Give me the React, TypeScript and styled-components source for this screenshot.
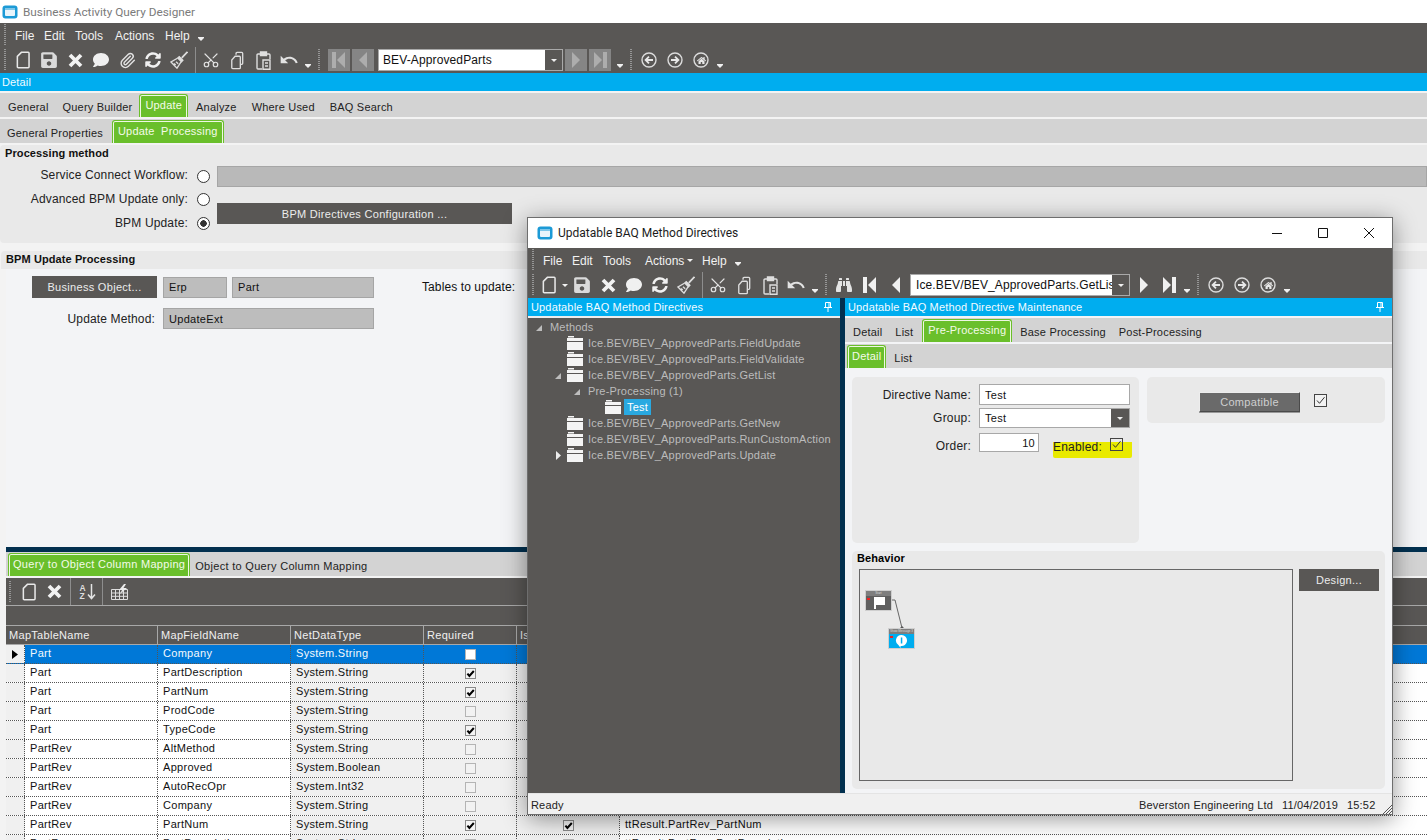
import React from "react";
import styled, { createGlobalStyle } from "styled-components";
import { Paperclip, Scissors } from "lucide-react";
import { FaBinoculars, FaComment, FaSave, FaSyncAlt, FaHome } from "react-icons/fa";
import { MdUndo } from "react-icons/md";

const UI_FONT = `"Liberation Sans", Arial, sans-serif`;
const TITLE_FONT = `Roboto, "Liberation Sans", sans-serif`;

const DARK = "#595755";
const CYAN = "#00adef";
const GREEN = "#6abf2b";
const TAB_GRAY = "#d3d3d3";
const GROUP = "#e9e9e9";
const PANEL = "#f3f4f6";
const NAVY = "#02304f";

const GlobalStyle = createGlobalStyle`
  html, body {
    margin: 0;
    padding: 0;
    width: 1427px;
    height: 840px;
    overflow: hidden;
    background: #f3f3f3;
  }
  * { box-sizing: border-box; }
`;

/* ---------- small drawn icons ---------- */

const Logo = () => (
  <svg width="16" height="14" viewBox="0 0 16 14">
    <rect x="0.5" y="0.5" width="15" height="13" rx="3" fill="#1c9ad6" />
    <rect x="3" y="3" width="10" height="8" rx="1" fill="#e8f4fb" />
    <rect x="3" y="3" width="10" height="2" fill="#7cc6ea" />
  </svg>
);

const NewPage = ({ size = 18 }: { size?: number }) => (
  <svg width={size * 0.8} height={size} viewBox="0 0 16 20" fill="none" stroke="#e8e8e8" strokeWidth="1.7">
    <path d="M6 1.5h7.5a1 1 0 0 1 1 1v15a1 1 0 0 1-1 1h-11a1 1 0 0 1-1-1V6z" />
  </svg>
);

const CrossIcon = () => (
  <svg width="15" height="15" viewBox="0 0 15 15" fill="none" stroke="#f2f2f2" strokeWidth="3.8">
    <path d="M2 2l11 11M13 2L2 13" />
  </svg>
);

const BroomIcon = () => (
  <svg width="18" height="18" viewBox="0 0 18 18" fill="none" stroke="#dedede" strokeWidth="1.3">
    <path d="M17.5.8 11.8 6.8" strokeWidth="1.8" />
    <path d="M9.3 5.6l3.6 3.6-1.4 1.6-3.8-3.8z" fill="#dedede" />
    <path d="M7.4 7.3 1 11l6 6.2 4.2-6.6M3.8 12.6l2 1.2M6 10.8l2.2 2" />
  </svg>
);

const CopyIcon = () => (
  <svg width="14" height="19" viewBox="0 0 14 20" fill="none" stroke="#dedede" strokeWidth="1.4">
    <path d="M6 4V2.5a1 1 0 0 1 1-1h5a1 1 0 0 1 1 1V13a1 1 0 0 1-1 1h-1.5" />
    <path d="M5 5.5h4.5a1 1 0 0 1 1 1v11a1 1 0 0 1-1 1h-7a1 1 0 0 1-1-1v-8z" />
  </svg>
);

const PasteIcon = () => (
  <svg width="15" height="19" viewBox="0 0 15 19" fill="none" stroke="#dedede" strokeWidth="1.4">
    <path d="M4 3H2a1 1 0 0 0-1 1v13a1 1 0 0 0 1 1h4M11 3h2a1 1 0 0 1 1 1v4" />
    <path d="M4.5 1h6v3.5h-6z" fill="#dedede" />
    <path d="M7 9h7v9.3H7zM9 12h3M9 15h3" />
  </svg>
);

const Triangle = ({ dir, bar, color }: { dir: "left" | "right"; bar?: boolean; color: string }) => (
  <svg width="14" height="18" viewBox="0 0 14 18" fill={color}>
    {dir === "left" ? (
      <>
        {bar && <rect x="0" y="1" width="4" height="16" />}
        <polygon points={bar ? "13,1 13,17 5,9" : "11,1 11,17 3,9"} />
      </>
    ) : (
      <>
        {bar && <rect x="10" y="1" width="4" height="16" />}
        <polygon points={bar ? "1,1 1,17 9,9" : "3,1 3,17 11,9"} />
      </>
    )}
  </svg>
);

const CircleArrow = ({ dir }: { dir: "left" | "right" }) => (
  <svg width="16" height="16" viewBox="0 0 16 16" fill="none">
    <circle cx="8" cy="8" r="7" stroke="#dcdcdc" strokeWidth="1.4" />
    <path
      d={dir === "left" ? "M12 8H5M8 4.6 4.6 8 8 11.4" : "M4 8h7M8 4.6 11.4 8 8 11.4"}
      stroke="#e8e8e8"
      strokeWidth="1.8"
    />
  </svg>
);

const HomeWrap = styled.span`
  position: relative;
  width: 16px;
  height: 16px;
  display: flex;
  align-items: center;
  justify-content: center;
  & > svg:first-child {
    position: absolute;
    inset: 0;
  }
`;

const CircleHome = () => (
  <HomeWrap>
    <svg width="16" height="16" viewBox="0 0 16 16" fill="none">
      <circle cx="8" cy="8" r="7" stroke="#dcdcdc" strokeWidth="1.4" />
    </svg>
    <FaHome size={9} color="#e8e8e8" />
  </HomeWrap>
);

const SortIcon = () => (
  <svg width="17" height="17" viewBox="0 0 17 17" fill="none">
    <text x="0.5" y="7.5" fontFamily={UI_FONT} fontSize="8.5" fontWeight="700" fill="#dedede">A</text>
    <text x="0.5" y="16" fontFamily={UI_FONT} fontSize="8.5" fontWeight="700" fill="#dedede">Z</text>
    <path d="M12.5 1v14M9 11.5l3.5 4 3.5-4" stroke="#e4e4e4" strokeWidth="1.5" />
  </svg>
);

const TableBolt = () => (
  <svg width="17" height="16" viewBox="0 0 17 16" fill="none" stroke="#dedede" strokeWidth="1">
    <path d="M.5 5.5h16v10H.5zM.5 9h16M.5 12.3h16M4.5 5.5v10M8.5 5.5v10M12.5 5.5v10" />
    <polygon points="13,0 8,6 11,6 9,10 16,4 12.5,4 15,0" fill="#ececec" stroke="none" />
  </svg>
);

const FolderIcon = () => (
  <svg width="16" height="14" viewBox="0 0 16 14" fill="#f4f4f4">
    <rect x="1" y="0" width="6" height="1.5" />
    <rect x="0" y="2" width="16" height="3" />
    <rect x="0" y="6" width="16" height="8" />
  </svg>
);

const PinIcon = () => (
  <svg width="8" height="10" viewBox="0 0 8 10" fill="none" stroke="#fff" strokeWidth="1">
    <path d="M1.5.5h5v5h-5zM0 5.5h8M4 5.5V10M5 .5v5" />
  </svg>
);

const Expander = ({ open }: { open?: boolean }) => (
  <svg width="7" height="9" viewBox="0 0 7 9" fill={open ? "#bdbdbd" : "#ececec"}>
    {open ? <polygon points="6,2 6,8 0,8" /> : <polygon points="1,0 6,4.5 1,9" />}
  </svg>
);

const Tick = ({ thin }: { thin?: boolean }) => (
  <svg width="11" height="11" viewBox="0 0 11 11" fill="none">
    <path
      d={thin ? "M2 5.5l2.5 2.8L9.5 2.2" : "M2.4 5.6l2 2.4 4.4-5"}
      stroke={thin ? "#333" : "#000"}
      strokeWidth={thin ? 1 : 2}
    />
  </svg>
);

/* ---------- main layout ---------- */

const Page = styled.div`
  position: relative;
  width: 1427px;
  height: 840px;
  overflow: hidden;
  display: flex;
  flex-direction: column;
  background: #f3f3f3;
  font-family: ${UI_FONT};
  font-size: 11px;
  letter-spacing: 0.3px;
  color: #111;
`;

const AppTitle = styled.div`
  height: 23px;
  flex: none;
  display: flex;
  align-items: center;
  gap: 5px;
  padding-left: 2px;
  background: #fff;
  font-family: ${TITLE_FONT};
  font-size: 11.8px;
  letter-spacing: 0;
  color: #7b7b7b;
`;

const MenuBar = styled.div`
  height: 24px;
  flex: none;
  display: flex;
  align-items: center;
  padding-left: 4px;
  background: ${DARK};
  color: #f2f2f2;
  font-size: 12px;
  letter-spacing: 0;
`;

const Menu = styled.span<{ $w: number }>`
  width: ${(p) => p.$w}px;
  display: inline-flex;
  align-items: center;
  gap: 3px;
  padding-top: 1px;
`;

const Caret = styled.span`
  width: 0;
  height: 0;
  border-left: 3px solid transparent;
  border-right: 3px solid transparent;
  border-top: 3px solid #f2f2f2;
`;

const Toolbar = styled.div`
  height: 26px;
  flex: none;
  display: flex;
  align-items: center;
  padding-left: 4px;
  background: ${DARK};
  color: #e2e2e2;
`;

const Grip = styled.span`
  flex: none;
  width: 2px;
  height: 22px;
  margin: 0 4px;
  background: repeating-linear-gradient(to bottom, #969696 0 1px, transparent 1px 2px);
  &:first-child {
    margin-left: 0;
  }
`;

const ToolSep = styled.span`
  flex: none;
  width: 1px;
  height: 26px;
  margin: 0 2px 0 3px;
  background: #8d8d8d;
`;

const Slot = styled.span<{ $w?: number }>`
  flex: none;
  width: ${(p) => p.$w ?? 26}px;
  height: 24px;
  display: flex;
  align-items: center;
  justify-content: center;
`;

const Rotated = styled.span<{ $deg: number }>`
  display: flex;
  transform: rotate(${(p) => p.$deg}deg);
`;

const Mini = styled.span`
  flex: none;
  width: 12px;
  height: 24px;
  display: flex;
  align-items: flex-end;
  justify-content: center;
  padding-bottom: 4px;
  &::after {
    content: "";
    width: 0;
    height: 0;
    border-left: 3px solid transparent;
    border-right: 3px solid transparent;
    border-top: 3px solid #f0f0f0;
    box-shadow: 0 -1px 0 #f0f0f0;
  }
`;

const MenuMini = styled(Mini)`
  padding-bottom: 6px;
`;

const NavGroup = styled.div`
  flex: none;
  display: flex;
  align-items: center;
  gap: 2px;
  margin-right: 3px;
  margin-left: 4px;
`;

const NavBox = styled.span`
  width: 22px;
  height: 22px;
  display: flex;
  align-items: center;
  justify-content: center;
  background: #858585;
`;

const Combo = styled.div<{ $w: number; $inset: number }>`
  flex: none;
  width: ${(p) => p.$w}px;
  height: 22px;
  display: flex;
  align-items: center;
  background: #fff;
  border: 1px solid #a9a9a9;
  color: #111;
  font-size: 12px;
  letter-spacing: 0.12px;
  padding-left: ${(p) => p.$inset}px;
  overflow: hidden;
  white-space: nowrap;
`;

const ComboText = styled.span`
  flex: 1;
  overflow: hidden;
`;

const ComboButton = styled.span`
  flex: none;
  width: 17px;
  align-self: stretch;
  display: flex;
  align-items: center;
  justify-content: center;
  background: ${DARK};
  &::after {
    content: "";
    border-left: 3px solid transparent;
    border-right: 3px solid transparent;
    border-top: 3px solid #f0f0f0;
  }
`;

const SectionBar = styled.div`
  height: 18px;
  flex: none;
  display: flex;
  align-items: center;
  justify-content: space-between;
  padding: 0 8px 0 2px;
  background: ${CYAN};
  color: #f2fbff;
  letter-spacing: 0.15px;
  overflow: hidden;
  white-space: nowrap;
`;

const TabRow = styled.div<{ $mt?: number }>`
  height: 24px;
  flex: none;
  display: flex;
  align-items: flex-end;
  margin-top: ${(p) => p.$mt ?? 2}px;
  background: ${TAB_GRAY};
  letter-spacing: 0.2px;
  white-space: nowrap;
`;

const WideTabRow = styled(TabRow)`
  letter-spacing: 0.3px;
`;

const Tab = styled.div<{ $active?: boolean; $pad?: number }>`
  height: ${(p) => (p.$active ? 23 : 24)}px;
  display: flex;
  align-items: ${(p) => (p.$active ? "flex-start" : "center")};
  padding: ${(p) =>
    p.$active ? `4px ${p.$pad ?? 4}px 0` : `4px ${p.$pad ?? 8}px 0`};
  color: ${(p) => (p.$active ? "#f4fbe9" : "#222")};
  background: ${(p) => (p.$active ? GREEN : "transparent")};
  border-radius: ${(p) => (p.$active ? "3px 3px 0 0" : "0")};
  border: ${(p) => (p.$active ? `1px solid ${GREEN}` : "0")};
  border-bottom: 0;
  box-shadow: ${(p) =>
    p.$active
      ? "inset 0 1px 0 #eef7e3, inset 1px 0 0 #eef7e3, inset -1px 0 0 #eef7e3"
      : "none"};
`;

const TabSpacer = styled.span<{ $w: number }>`
  flex: none;
  width: ${(p) => p.$w}px;
`;

const ProcessingGroup = styled.section`
  height: 98px;
  flex: none;
  margin: 2px 0 8px;
  background: ${GROUP};
  border-radius: 4px 0 0 4px;
`;

const GroupTitle = styled.div`
  height: 16px;
  display: flex;
  align-items: center;
  padding-left: 5px;
  font-weight: 700;
  letter-spacing: 0.1px;
`;

const ProcessingGrid = styled.div`
  display: grid;
  grid-template-columns: 188px 29px 1fr;
  grid-template-rows: 23px 24px 24px;
  margin-top: 4px;
  align-items: center;
`;

const RowLabel = styled.label`
  text-align: right;
  font-size: 12px;
  letter-spacing: 0.15px;
  color: #222;
  margin-bottom: 3px;
`;

const Radio = styled.span<{ $on?: boolean }>`
  width: 13px;
  height: 13px;
  margin-left: 9px;
  margin-bottom: 1px;
  border: 1px solid #333;
  border-radius: 50%;
  background: ${(p) => (p.$on ? "radial-gradient(circle, #333 0 3px, #fff 3.5px)" : "#fff")};
`;

const ServiceField = styled.div`
  height: 21px;
  background: #b9b9b9;
  border: 1px solid #a6a6a6;
`;

const DarkButton = styled.button<{ $w?: number; $h?: number }>`
  flex: none;
  width: ${(p) => (p.$w ? `${p.$w}px` : "100%")};
  height: ${(p) => p.$h ?? 22}px;
  border: 0;
  padding: 0;
  background: ${DARK};
  color: #ececec;
  font-family: ${UI_FONT};
  font-size: 11px;
  letter-spacing: 0.3px;
`;

const BpmConfigCell = styled.div`
  grid-column: 3;
  grid-row: 2 / 4;
  display: flex;
  align-items: center;
  padding-top: 3px;
`;

const BpmHeader = styled(GroupTitle)`
  flex: none;
  height: 18px;
  padding: 0 0 3px 5px;
  margin-left: 1px;
  background: ${GROUP};
  border-radius: 4px 0 0 0;
`;

const BpmBody = styled.div`
  flex: none;
  height: 278px;
  margin-left: 6px;
  padding: 7px 0 0 26px;
  background: ${PANEL};
  display: grid;
  grid-template-columns: 126px 64px 142px 1fr;
  grid-template-rows: 22px 21px;
  column-gap: 5px;
  row-gap: 10px;
  align-items: center;
`;

const ReadOnly = styled.div<{ $span?: number }>`
  grid-column: span ${(p) => p.$span ?? 1};
  height: 21px;
  display: flex;
  align-items: center;
  padding-left: 5px;
  background: #bdbdbd;
  border: 1px solid #a5a5a5;
`;

const TablesLabel = styled.span`
  margin-left: 43px;
  font-size: 12px;
  letter-spacing: 0.1px;
`;

const MethodLabel = styled(RowLabel)`
  margin-bottom: 0;
  padding-right: 3px;
`;

const Splitter = styled.div`
  height: 5px;
  flex: none;
  margin-left: 6px;
  background: ${NAVY};
`;

const LowerArea = styled.div`
  flex: 1;
  margin-left: 6px;
  display: flex;
  flex-direction: column;
  overflow: hidden;
`;

const GridToolbar = styled.div`
  height: 27px;
  flex: none;
  margin-top: 2px;
  display: flex;
  align-items: center;
  padding-left: 3px;
  background: ${DARK};
`;

const GridSep = styled.span`
  width: 1px;
  height: 27px;
  margin: 0 5px 0 4px;
  background: #8d8d8d;
`;

const GroupByBand = styled.div`
  height: 20px;
  flex: none;
  background: ${DARK};
  border-top: 1px solid #a8a8a8;
`;

const gridColumns = "19px 133px 133px 133px 93px 103px 1fr";

const HeaderRow = styled.div`
  height: 20px;
  flex: none;
  display: grid;
  grid-template-columns: ${gridColumns};
  background: ${DARK};
  border-top: 1px solid #a8a8a8;
  border-bottom: 1px solid #a8a8a8;
  color: #f0f0f0;
`;

const HeaderCell = styled.div<{ $wide?: boolean }>`
  grid-column: ${(p) => (p.$wide ? "span 2" : "auto")};
  padding-left: 3px;
  line-height: 18px;
  border-right: 1px solid #a8a8a8;
  &:last-child {
    border-right: 0;
  }
`;

const DataRow = styled.div<{ $selected?: boolean }>`
  height: 19px;
  flex: none;
  display: grid;
  grid-template-columns: ${gridColumns};
  border-bottom: 1px dotted #555;
  background: ${(p) => (p.$selected ? "#0078d7" : "#fff")};
  color: ${(p) => (p.$selected ? "#f4f9fd" : "#111")};
`;

const RowHeadCell = styled.div`
  display: flex;
  align-items: center;
  justify-content: center;
  background: #f0f0f0;
  border-right: 1px dotted #555;
`;

const Cell = styled.div<{ $shade?: boolean; $selected?: boolean }>`
  padding-left: 5px;
  line-height: 16px;
  border-right: 1px dotted #555;
  background: ${(p) => (p.$selected ? "transparent" : p.$shade ? "#f0f0f0" : "#fff")};
  overflow: hidden;
  white-space: nowrap;
  &:last-child {
    border-right: 0;
  }
`;

const CheckCell = styled(Cell)`
  padding-left: 0;
  display: flex;
  align-items: center;
  justify-content: center;
`;

const GridCheck = styled.span<{ $on?: boolean; $white?: boolean }>`
  width: 11px;
  height: 11px;
  display: flex;
  background: ${(p) => (p.$white ? "#fff" : p.$on ? "#f4f4f4" : "#f2f2f2")};
  border: 1px solid ${(p) => (p.$on ? "#8a8a8a" : "#b4b4b4")};
  & > svg {
    margin: -1px;
  }
`;

/* ---------- method directives window ---------- */

const DirectivesWindow = styled.div`
  position: absolute;
  left: 527px;
  top: 217px;
  width: 866px;
  height: 598px;
  display: flex;
  flex-direction: column;
  background: #f0f0f0;
  border: 1px solid #6e6e6e;
  box-shadow: 0 4px 22px rgba(0, 0, 0, 0.42);
`;

const WindowTitle = styled.div`
  height: 30px;
  flex: none;
  display: flex;
  align-items: center;
  padding-left: 9px;
  background: #fff;
  font-family: ${TITLE_FONT};
  font-size: 12px;
  letter-spacing: 0;
  color: #1c1c1c;
`;

const TitleText = styled.span`
  flex: 1;
  margin-left: 5px;
`;

const WindowButton = styled.span`
  width: 46px;
  height: 30px;
  display: flex;
  align-items: center;
  justify-content: center;
  margin-bottom: 1px;
`;

const WindowPanes = styled.div`
  flex: 1;
  min-height: 0;
  display: grid;
  grid-template-columns: 312px 5px 1fr;
`;

const PaneSplitter = styled.div`
  background: ${NAVY};
`;

const TreePane = styled.div`
  display: flex;
  flex-direction: column;
  background: ${DARK};
`;

const PaneBar = styled(SectionBar)`
  padding: 0 8px 0 3px;
`;

const TreeList = styled.ul`
  list-style: none;
  margin: 0;
  padding: 1px 0 0;
  flex: 1;
  background: ${DARK};
  border-top: 2px solid #ececec;
  color: #bcbcbc;
  letter-spacing: 0.18px;
`;

const TreeRow = styled.li<{ $indent: number }>`
  height: 16px;
  display: flex;
  align-items: center;
  padding-left: ${(p) => p.$indent}px;
  white-space: nowrap;
`;

const ExpanderSlot = styled.span<{ $w: number }>`
  flex: none;
  width: ${(p) => p.$w}px;
  display: flex;
  justify-content: flex-start;
`;

const FolderSlot = styled.span`
  flex: none;
  width: 21px;
  display: flex;
`;

const TreeHighlight = styled.span`
  margin-left: -2px;
  padding: 0 3px;
  line-height: 16px;
  background: #29a9e1;
  color: #fff;
`;

const DetailPane = styled.div`
  display: flex;
  flex-direction: column;
  background: ${PANEL};
  min-width: 0;
`;

const DetailBody = styled.div`
  flex: 1;
  padding: 9px 7px 5px 7px;
  display: grid;
  grid-template-columns: 287px 238px;
  grid-template-rows: 166px 238px;
  column-gap: 8px;
  row-gap: 8px;
`;

const RoundGroup = styled.div<{ $h?: number }>`
  height: ${(p) => (p.$h ? `${p.$h}px` : "auto")};
  background: ${GROUP};
  border-radius: 5px;
`;

const FormGrid = styled.div`
  display: grid;
  grid-template-columns: 119px 151px;
  grid-template-rows: 21px 20px 22px;
  column-gap: 8px;
  row-gap: 3px;
  padding-top: 7px;
  align-items: center;
`;

const FormLabel = styled.label`
  text-align: right;
  font-size: 12px;
  letter-spacing: 0.2px;
  color: #222;
`;

const OrderLabel = styled(FormLabel)`
  margin-top: 7px;
`;

const TextInput = styled.div`
  height: 100%;
  display: flex;
  align-items: center;
  padding-left: 5px;
  background: #fff;
  border: 1px solid #a8a8a8;
`;

const GroupSelect = styled(TextInput)`
  padding-right: 0;
  justify-content: space-between;
`;

const SelectButton = styled(ComboButton)`
  width: 18px;
`;

const OrderRow = styled.div`
  height: 100%;
  display: flex;
  align-items: flex-start;
`;

const OrderInput = styled(TextInput)`
  flex: none;
  width: 60px;
  height: 19px;
  margin-top: 2px;
  justify-content: flex-end;
  padding: 0 3px 0 0;
`;

const EnabledField = styled.div`
  position: relative;
  flex: none;
  margin-left: 14px;
  width: 79px;
  height: 100%;
  display: flex;
  align-items: center;
  gap: 8px;
  font-size: 12px;
  letter-spacing: 0.2px;
  color: #222;
`;

const Highlighter = styled.span`
  position: absolute;
  left: 0;
  top: 11px;
  width: 79px;
  height: 16px;
  background: #e9ea00;
  border-radius: 0 0 2px 2px;
`;

const EnabledLabel = styled.span`
  position: relative;
  margin-top: 10px;
`;

const FormCheck = styled.span`
  position: relative;
  flex: none;
  width: 13px;
  height: 13px;
  margin-top: 5px;
  display: flex;
  align-items: center;
  justify-content: center;
  background: transparent;
  border: 1px solid #444;
`;

const CompatibleRow = styled.div`
  display: flex;
  align-items: center;
  padding: 15px 0 0 52px;
`;

const CompatibleButton = styled.button`
  width: 101px;
  height: 20px;
  padding: 0;
  background: #6a6a6a;
  color: #cfcfcf;
  font-family: ${UI_FONT};
  font-size: 11px;
  letter-spacing: 0.3px;
  border: 1px solid #ededed;
  border-right-color: #4a4a4a;
  border-bottom-color: #4a4a4a;
  box-shadow: 0 1px 0 #999;
`;

const CompatibleCheck = styled(FormCheck)`
  margin: -4px 0 0 14px;
  background: #f2f2f2;
`;

const BehaviorGroup = styled(RoundGroup)`
  grid-column: 1 / 3;
  padding: 0 6px 0 7px;
`;

const BehaviorLabel = styled.div`
  margin: 0 0 4px -2px;
  line-height: 14px;
  color: #000;
  letter-spacing: 0.1px;
  font-size: 11px;
  font-weight: 700;
`;

const BehaviorContent = styled.div`
  display: flex;
  gap: 6px;
`;

const DiagramCanvas = styled.div`
  position: relative;
  width: 434px;
  height: 212px;
  flex: none;
  background: ${GROUP};
  border: 1px solid #666;
`;

const DiagramNode = styled.div<{ $x: number; $y: number; $bg: string }>`
  position: absolute;
  left: ${(p) => p.$x}px;
  top: ${(p) => p.$y}px;
  width: 25px;
  height: 19px;
  display: flex;
  flex-direction: column;
  background: ${(p) => p.$bg};
  box-shadow: 0 0 0 1px #cfcfcf;
`;

const NodeTitle = styled.div`
  height: 5px;
  background: #7e7e7e;
  color: #ddd;
  font-size: 3px;
  line-height: 5px;
  text-align: center;
  letter-spacing: 0;
  white-space: nowrap;
  overflow: hidden;
`;

const NodeIcon = styled.div`
  flex: 1;
  display: flex;
  align-items: center;
  justify-content: center;
`;

const NodeMark = styled.span`
  position: absolute;
  left: 1px;
  top: 7px;
  width: 3px;
  height: 2px;
  background: #f02020;
`;

const NodeWire = styled.svg`
  position: absolute;
  left: 30px;
  top: 29px;
`;

const StatusBar = styled.div`
  height: 21px;
  flex: none;
  display: flex;
  align-items: center;
  padding: 2px 18px 0 3px;
  background: #f0f0f0;
  border-top: 1px solid #e4e4e4;
  color: #222;
  letter-spacing: 0.18px;
  position: relative;
`;

const StatusReady = styled.span`
  flex: 1;
`;

const StatusItem = styled.span<{ $w: number }>`
  flex: none;
  width: ${(p) => p.$w}px;
  white-space: nowrap;
`;

const ResizeGrip = styled.svg`
  position: absolute;
  right: 0;
  bottom: 0;
`;

/* ---------- data ---------- */

const rows = [
  ["Part", "Company", "System.String", false],
  ["Part", "PartDescription", "System.String", true],
  ["Part", "PartNum", "System.String", true],
  ["Part", "ProdCode", "System.String", false],
  ["Part", "TypeCode", "System.String", true],
  ["PartRev", "AltMethod", "System.String", false],
  ["PartRev", "Approved", "System.Boolean", false],
  ["PartRev", "AutoRecOpr", "System.Int32", false],
  ["PartRev", "Company", "System.String", false],
  ["PartRev", "PartNum", "System.String", true],
  ["PartRev", "PartDescription", "System.String", false],
] as const;

const mappings: Record<number, string> = {
  9: "ttResult.PartRev_PartNum",
  10: "ttResult.PartRev_PartDescription",
};

const treeItems = [
  { label: "Ice.BEV/BEV_ApprovedParts.FieldUpdate" },
  { label: "Ice.BEV/BEV_ApprovedParts.FieldValidate" },
  { label: "Ice.BEV/BEV_ApprovedParts.GetList", open: true },
];

const treeItemsAfter = [
  { label: "Ice.BEV/BEV_ApprovedParts.GetNew" },
  { label: "Ice.BEV/BEV_ApprovedParts.RunCustomAction" },
  { label: "Ice.BEV/BEV_ApprovedParts.Update", closed: true },
];

const App = () => {
  return (
    <Page>
      <GlobalStyle />

      <AppTitle>
        <Logo />
        Business Activity Query Designer
      </AppTitle>

      <MenuBar>
        <Grip />
        <TabSpacer $w={5} />
        <Menu $w={29}>File</Menu>
        <Menu $w={31}>Edit</Menu>
        <Menu $w={40}>Tools</Menu>
        <Menu $w={50}>Actions</Menu>
        <Menu $w={30}>Help</Menu>
        <MenuMini />
      </MenuBar>

      <Toolbar>
        <Grip />
        <Slot><NewPage /></Slot>
        <Slot><FaSave size={18} color="#dadada" /></Slot>
        <Slot><CrossIcon /></Slot>
        <Slot><FaComment size={16} color="#f0f0f0" /></Slot>
        <Slot><Paperclip size={17} strokeWidth={2} /></Slot>
        <Slot><FaSyncAlt size={16} color="#f0f0f0" /></Slot>
        <Slot><BroomIcon /></Slot>
        <ToolSep />
        <Slot><Rotated $deg={-90}><Scissors size={18} strokeWidth={1.6} /></Rotated></Slot>
        <Slot><CopyIcon /></Slot>
        <Slot><PasteIcon /></Slot>
        <Slot><MdUndo size={20} /></Slot>
        <Mini />
        <Grip />
        <NavGroup>
          <NavBox><Triangle dir="left" bar color="#adadad" /></NavBox>
          <NavBox><Triangle dir="left" color="#adadad" /></NavBox>
          <TabSpacer $w={0} />
          <Combo $w={185} $inset={4}>
            <ComboText>BEV-ApprovedParts</ComboText>
            <ComboButton />
          </Combo>
          <NavBox><Triangle dir="right" color="#adadad" /></NavBox>
          <NavBox><Triangle dir="right" bar color="#adadad" /></NavBox>
        </NavGroup>
        <Mini />
        <Grip />
        <Slot><CircleArrow dir="left" /></Slot>
        <Slot><CircleArrow dir="right" /></Slot>
        <Slot><CircleHome /></Slot>
        <Mini />
      </Toolbar>

      <SectionBar>Detail</SectionBar>

      <TabRow>
        <TabSpacer $w={1} />
        <Tab $pad={7}>General</Tab>
        <Tab $pad={7}>Query Builder</Tab>
        <Tab $active $pad={5}>Update</Tab>
        <Tab>Analyze</Tab>
        <Tab $pad={7}>Where Used</Tab>
        <Tab>BAQ Search</Tab>
      </TabRow>

      <TabRow>
        <Tab $pad={7}>General Properties</Tab>
        <TabSpacer $w={2} />
        <Tab $active $pad={5}>Update &nbsp;Processing</Tab>
      </TabRow>

      <ProcessingGroup>
        <GroupTitle>Processing method</GroupTitle>
        <ProcessingGrid>
          <RowLabel>Service Connect Workflow:</RowLabel>
          <Radio />
          <ServiceField />
          <RowLabel>Advanced BPM Update only:</RowLabel>
          <Radio />
          <BpmConfigCell>
            <DarkButton $w={295} $h={21}>BPM Directives Configuration ...</DarkButton>
          </BpmConfigCell>
          <RowLabel>BPM Update:</RowLabel>
          <Radio $on />
        </ProcessingGrid>
      </ProcessingGroup>

      <BpmHeader>BPM Update Processing</BpmHeader>
      <BpmBody>
        <DarkButton $w={125}>Business Object...</DarkButton>
        <ReadOnly>Erp</ReadOnly>
        <ReadOnly>Part</ReadOnly>
        <TablesLabel>Tables to update:</TablesLabel>
        <MethodLabel>Update Method:</MethodLabel>
        <ReadOnly $span={2}>UpdateExt</ReadOnly>
      </BpmBody>

      <Splitter />

      <LowerArea>
        <WideTabRow $mt={0}>
          <TabSpacer $w={2} />
          <Tab $active>Query to Object Column Mapping</Tab>
          <Tab $pad={5}>Object to Query Column Mapping</Tab>
        </WideTabRow>

        <GridToolbar>
          <Grip />
          <Slot $w={28}><NewPage size={18} /></Slot>
          <Slot $w={23}><CrossIcon /></Slot>
          <GridSep />
          <Slot $w={22}><SortIcon /></Slot>
          <GridSep />
          <Slot $w={22}><TableBolt /></Slot>
        </GridToolbar>
        <GroupByBand />

        <HeaderRow>
          <HeaderCell $wide>MapTableName</HeaderCell>
          <HeaderCell>MapFieldName</HeaderCell>
          <HeaderCell>NetDataType</HeaderCell>
          <HeaderCell>Required</HeaderCell>
          <HeaderCell>Is</HeaderCell>
          <HeaderCell />
        </HeaderRow>

        {rows.map(([table, field, type, required], i) => (
          <DataRow key={i} $selected={i === 0}>
            <RowHeadCell>
              {i === 0 && (
                <svg width="6" height="9" viewBox="0 0 6 9"><polygon points="0,0 6,4.5 0,9" fill="#000" /></svg>
              )}
            </RowHeadCell>
            <Cell $selected={i === 0}>{table}</Cell>
            <Cell $selected={i === 0}>{field}</Cell>
            <Cell $shade $selected={i === 0}>{type}</Cell>
            <CheckCell $shade $selected={i === 0}>
              <GridCheck $on={required} $white={i === 0}>{required && <Tick />}</GridCheck>
            </CheckCell>
            <CheckCell $shade $selected={i === 0}>
              <GridCheck $on={i === 9} $white={i === 0}>{i === 9 && <Tick />}</GridCheck>
            </CheckCell>
            <Cell $selected={i === 0}>{mappings[i]}</Cell>
          </DataRow>
        ))}
      </LowerArea>

      <DirectivesWindow>
        <WindowTitle>
          <Logo />
          <TitleText>Updatable BAQ Method Directives</TitleText>
          <WindowButton>
            <svg width="10" height="10" viewBox="0 0 10 10" stroke="#111"><path d="M0 5.5h10" /></svg>
          </WindowButton>
          <WindowButton>
            <svg width="10" height="10" viewBox="0 0 10 10" fill="none" stroke="#111"><path d="M.5.5h9v9h-9z" /></svg>
          </WindowButton>
          <WindowButton>
            <svg width="10" height="10" viewBox="0 0 10 10" stroke="#111"><path d="M0 0l10 10M10 0L0 10" /></svg>
          </WindowButton>
        </WindowTitle>

        <MenuBar>
          <Grip />
          <TabSpacer $w={5} />
          <Menu $w={29}>File</Menu>
          <Menu $w={31}>Edit</Menu>
          <Menu $w={42}>Tools</Menu>
          <Menu $w={57}>Actions<Caret /></Menu>
          <Menu $w={30}>Help</Menu>
          <MenuMini />
        </MenuBar>

        <Toolbar>
          <Grip />
          <Slot $w={22}><NewPage /></Slot>
          <Slot $w={9}><Caret /></Slot>
          <Slot><FaSave size={18} color="#dadada" /></Slot>
          <Slot><CrossIcon /></Slot>
          <Slot><FaComment size={16} color="#f0f0f0" /></Slot>
          <Slot><FaSyncAlt size={16} color="#f0f0f0" /></Slot>
          <Slot><BroomIcon /></Slot>
          <ToolSep />
          <Slot><Rotated $deg={-90}><Scissors size={18} strokeWidth={1.6} /></Rotated></Slot>
          <Slot><CopyIcon /></Slot>
          <Slot><PasteIcon /></Slot>
          <Slot><MdUndo size={20} /></Slot>
          <Mini />
          <Grip />
          <Slot><FaBinoculars size={16} color="#e4e4e4" /></Slot>
          <Slot><Triangle dir="left" bar color="#f0f0f0" /></Slot>
          <Slot><Triangle dir="left" color="#f0f0f0" /></Slot>
          <TabSpacer $w={1} />
          <Combo $w={220} $inset={5}>
            <ComboText>Ice.BEV/BEV_ApprovedParts.GetList</ComboText>
            <ComboButton />
          </Combo>
          <TabSpacer $w={1} />
          <Slot><Triangle dir="right" color="#f0f0f0" /></Slot>
          <Slot $w={24}><Triangle dir="right" bar color="#f0f0f0" /></Slot>
          <Mini />
          <Grip />
          <Slot><CircleArrow dir="left" /></Slot>
          <Slot><CircleArrow dir="right" /></Slot>
          <Slot><CircleHome /></Slot>
          <Mini />
        </Toolbar>

        <WindowPanes>
          <TreePane>
            <PaneBar>
              Updatable BAQ Method Directives
              <PinIcon />
            </PaneBar>
            <TreeList>
              <TreeRow $indent={8}>
                <ExpanderSlot $w={14}><Expander open /></ExpanderSlot>
                Methods
              </TreeRow>
              {treeItems.map((item) => (
                <TreeRow key={item.label} $indent={27}>
                  <ExpanderSlot $w={12}>{item.open && <Expander open />}</ExpanderSlot>
                  <FolderSlot><FolderIcon /></FolderSlot>
                  {item.label}
                </TreeRow>
              ))}
              <TreeRow $indent={46}>
                <ExpanderSlot $w={14}><Expander open /></ExpanderSlot>
                Pre-Processing (1)
              </TreeRow>
              <TreeRow $indent={77}>
                <FolderSlot><FolderIcon /></FolderSlot>
                <TreeHighlight>Test</TreeHighlight>
              </TreeRow>
              {treeItemsAfter.map((item) => (
                <TreeRow key={item.label} $indent={27}>
                  <ExpanderSlot $w={12}>{item.closed && <Expander />}</ExpanderSlot>
                  <FolderSlot><FolderIcon /></FolderSlot>
                  {item.label}
                </TreeRow>
              ))}
            </TreeList>
          </TreePane>

          <PaneSplitter />

          <DetailPane>
            <PaneBar>
              Updatable BAQ Method Directive Maintenance
              <PinIcon />
            </PaneBar>
            <TabRow>
              <Tab>Detail</Tab>
              <Tab $pad={5}>List</Tab>
              <TabSpacer $w={4} />
              <Tab $active $pad={5}>Pre-Processing</Tab>
              <Tab>Base Processing</Tab>
              <Tab $pad={5}>Post-Processing</Tab>
            </TabRow>
            <TabRow>
              <TabSpacer $w={2} />
              <Tab $active>Detail</Tab>
              <Tab>List</Tab>
            </TabRow>

            <DetailBody>
              <RoundGroup>
                <FormGrid>
                  <FormLabel>Directive Name:</FormLabel>
                  <TextInput>Test</TextInput>
                  <FormLabel>Group:</FormLabel>
                  <GroupSelect>
                    Test
                    <SelectButton />
                  </GroupSelect>
                  <OrderLabel>Order:</OrderLabel>
                  <OrderRow>
                    <OrderInput>10</OrderInput>
                    <EnabledField>
                      <Highlighter />
                      <EnabledLabel>Enabled:</EnabledLabel>
                      <FormCheck><Tick thin /></FormCheck>
                    </EnabledField>
                  </OrderRow>
                </FormGrid>
              </RoundGroup>

              <RoundGroup $h={46}>
                <CompatibleRow>
                  <CompatibleButton>Compatible</CompatibleButton>
                  <CompatibleCheck><Tick thin /></CompatibleCheck>
                </CompatibleRow>
              </RoundGroup>

              <BehaviorGroup>
                <BehaviorLabel>Behavior</BehaviorLabel>
                <BehaviorContent>
                  <DiagramCanvas>
                    <NodeWire width="14" height="32" viewBox="0 0 14 32" fill="none" stroke="#666">
                      <path d="M0 1h5l7 28" />
                      <circle cx="12" cy="29" r="1.2" fill="#333" />
                    </NodeWire>
                    <DiagramNode $x={6} $y={21} $bg="#5f5f5f">
                      <NodeTitle>Start</NodeTitle>
                      <NodeMark />
                      <NodeIcon>
                        <svg width="12" height="12" viewBox="0 0 12 12" fill="#fff">
                          <path d="M1 0h11v8H3v4H1z" />
                        </svg>
                      </NodeIcon>
                    </DiagramNode>
                    <DiagramNode $x={29} $y={59} $bg={CYAN}>
                      <NodeTitle>Show Message 3</NodeTitle>
                      <NodeMark />
                      <NodeIcon>
                        <svg width="13" height="13" viewBox="0 0 13 13">
                          <path d="M6.5 0a5.5 5.5 0 1 1-1 10.9L5.6 13l-2-2.8A5.5 5.5 0 0 1 6.5 0z" fill="#fff" />
                          <rect x="5.8" y="2.5" width="1.5" height="6" fill={CYAN} />
                        </svg>
                      </NodeIcon>
                    </DiagramNode>
                  </DiagramCanvas>
                  <DarkButton $w={80} $h={22}>Design...</DarkButton>
                </BehaviorContent>
              </BehaviorGroup>
            </DetailBody>
          </DetailPane>
        </WindowPanes>

        <StatusBar>
          <StatusReady>Ready</StatusReady>
          <StatusItem $w={143}>Beverston Engineering Ltd</StatusItem>
          <StatusItem $w={65}>11/04/2019</StatusItem>
          <StatusItem $w={27}>15:52</StatusItem>
          <ResizeGrip width="10" height="10" viewBox="0 0 10 10" stroke="#555">
            <path d="M10 1L1 10M10 4L4 10M10 7L7 10" />
          </ResizeGrip>
        </StatusBar>
      </DirectivesWindow>
    </Page>
  );
};

export default App;
